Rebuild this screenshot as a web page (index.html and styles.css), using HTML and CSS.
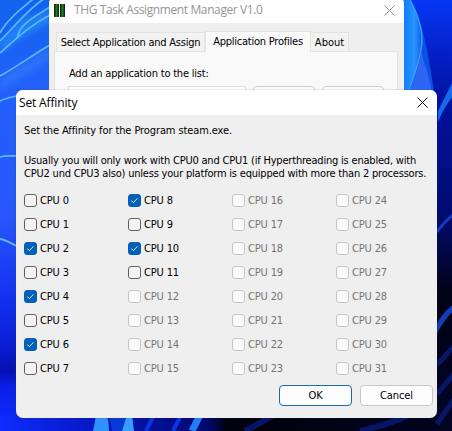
FILE: index.html
```html
<!DOCTYPE html>
<html lang="en">
<head>
<meta charset="utf-8">
<title>Set Affinity</title>
<link rel="stylesheet" href="styles.css">
</head>
<body>
<main class="desktop">
  <svg class="wallpaper" viewBox="0 0 452 431" preserveAspectRatio="none" aria-hidden="true">
    <defs>
      <linearGradient id="base" x1="0" y1="0" x2="0" y2="1">
        <stop offset="0" stop-color="#1263ee"/><stop offset=".2" stop-color="#2260fa"/>
        <stop offset=".5" stop-color="#2857fb"/><stop offset=".7" stop-color="#1030ee"/>
        <stop offset=".8" stop-color="#0a1fd4"/><stop offset=".86" stop-color="#0510b0"/>
        <stop offset=".9" stop-color="#0a20e8"/><stop offset="1" stop-color="#0c2dff"/>
      </linearGradient>
      <linearGradient id="right" x1="0" y1="0" x2="0" y2="1">
        <stop offset="0" stop-color="#0638f4"/><stop offset=".12" stop-color="#0420c8"/>
        <stop offset=".25" stop-color="#02119b"/><stop offset=".5" stop-color="#020b70"/>
        <stop offset=".68" stop-color="#010216"/><stop offset="1" stop-color="#010426"/>
      </linearGradient>
      <linearGradient id="petal" x1="0" y1="0" x2="1" y2="0">
        <stop offset="0" stop-color="#0876f7"/><stop offset=".7" stop-color="#2895ff"/><stop offset="1" stop-color="#1264ee"/>
      </linearGradient>
      <linearGradient id="bottom" x1="0" y1="0" x2="1" y2="0">
        <stop offset="0" stop-color="#0c2dff"/><stop offset=".2" stop-color="#0719c4"/>
        <stop offset=".46" stop-color="#020870"/><stop offset=".5" stop-color="#01020b"/><stop offset="1" stop-color="#010320"/>
      </linearGradient>
      <filter id="soft" filterUnits="userSpaceOnUse" x="-10" y="-10" width="472" height="451" color-interpolation-filters="sRGB"><feGaussianBlur stdDeviation=".6"/></filter>
      <filter id="wide" filterUnits="userSpaceOnUse" x="-10" y="-10" width="472" height="451" color-interpolation-filters="sRGB"><feGaussianBlur stdDeviation="3"/></filter>
    </defs>
    <rect width="452" height="431" fill="url(#base)"/>
    <path d="M400 0H452V431H400Z" fill="url(#right)"/>
    <path d="M0 416H452V431H0Z" fill="url(#bottom)"/>
    <path d="M17 40C20 25 35 17 50 9V23C31 31 15 41 0 53V42C10 31 18 22 27 14L33 16C24 24 18 31 17 40Z" fill="#2a96fa" opacity=".65" filter="url(#wide)"/>
    <path d="M0 78C18 68 34 56 50 47V60C31 72 17 81 0 90Z" fill="#3a83ff" opacity=".5" filter="url(#wide)"/>
    <g fill="none" stroke="#5cb8fb" stroke-width="1.7" filter="url(#soft)">
      <path d="M0 33C6 21 20 9 36-3"/>
      <path d="M0 41C16 25 29 8 48-4"/>
      <path d="M17 39C19 24 33 18 50 7"/>
      <path d="M0 53C17 38 29 26 50 15"/>
      <path d="M0 76C18 66 34 54 50 45"/>
      <path d="M0 101C6 98 12 97 17 96"/>
      <path d="M0 157C6 155 12 156 17 156"/>
      <path d="M0 239C7 240 12 244 17 246" stroke-width="2"/>
    </g>
    <g filter="url(#soft)">
      <path d="M412 0C423 22 429 59 434 91H404V0Z" fill="#0a50e6"/>
      <path d="M400 0H409C418 15 423 32 420 49C419 65 412 79 408 92H400Z" fill="url(#petal)"/>
      <path d="M410 0C419 17 424 35 421 49C419 66 412 79 409 91" fill="none" stroke="#3ba0fa" stroke-width="1.5"/>
      <path d="M421 50C423 62 430 75 432 94H408C413 80 420 67 421 50Z" fill="#2e65f3"/>
      <path d="M454 79L438 111V122C443 110 448 102 454 95Z" fill="#1469ee"/>
      <path d="M437 232C443 223 449 218 455 213" fill="none" stroke="#153bc0" stroke-width="3"/>
      <path d="M437 324C442 314 448 308 455 303V310C449 315 443 322 437 334Z" fill="#123eba"/>
      <path d="M437 365L455 345M437 394L455 373M437 424L455 398" stroke="#071768" stroke-width="5"/>
      <path d="M96 415H107Q109 424 109 431H93Q95 422 96 415Z" fill="#2f91fa"/>
      <path d="M109 415L112 431H122L130 415Z" fill="#0838d6"/>
      <path d="M127 415H132L134 431H122Z" fill="#379dff"/>
      <path d="M154 415L146 431M181 415L173 431" stroke="#0b35e0" stroke-width="4"/>
      <path d="M200 415L192 431" stroke="#207df7" stroke-width="7"/>
      <path d="M245 431Q259 424 272 416M360 431Q387 425 407 416" fill="none" stroke="#071566" stroke-width="6"/>
    </g>
  </svg>

  <section class="manager">
    <header class="titlebar">
      <svg class="app-icon" viewBox="0 0 12 13" aria-hidden="true">
        <path d="M0 0h5v13H0zM6 0h5v13H6z" fill="#123a13"/>
        <path d="M1.5 0h2v13h-2zM7.5 0h2v13h-2z" fill="#167c20"/>
        <path d="M.5 1v12M4.5 1v12M6.5 1v12M10.5 1v12" stroke="#071307" stroke-dasharray="1 1"/>
      </svg>
      <h1 class="manager-title">THG Task Assignment Manager V1.0</h1>
      <svg class="close" viewBox="0 0 11 11" aria-hidden="true"><path d="M.5.5l10 10M10.5.5l-10 10"/></svg>
    </header>
    <nav class="tabs">
      <span class="tab tab-select">Select Application and Assign</span>
      <span class="tab tab-active">Application Profiles</span>
      <span class="tab tab-about">About</span>
    </nav>
    <div class="panel">
      <p class="list-label">Add an application to the list:</p>
      <div class="controls"><span class="field"></span><span class="stub"></span><span class="stub"></span></div>
    </div>
  </section>

  <section class="dialog">
    <header class="dialog-bar">
      <h2 class="dialog-title">Set Affinity</h2>
      <svg class="close close-dark" viewBox="0 0 11 11" aria-hidden="true"><path d="M.5.5l10 10M10.5.5l-10 10"/></svg>
    </header>
    <div class="dialog-body">
      <p class="intro">Set the Affinity for the Program steam.exe.</p>
      <p class="hint">Usually you will only work with CPU0 and CPU1 (if Hyperthreading is enabled, with<br>CPU2 und CPU3 also) unless your platform is equipped with more than 2 processors.</p>
      <div class="cpus" id="cpus"></div>
      <footer class="actions"><button class="button primary">OK</button><button class="button">Cancel</button></footer>
    </div>
  </section>
</main>
<script src="script.js"></script>
</body>
</html>
```
FILE: styles.css
```css
* { box-sizing: border-box; }
body { margin: 0; overflow: hidden; font: 11px/13px "DejaVu Sans Condensed", "DejaVu Sans", sans-serif; font-stretch: condensed; color: #000; }
h1, h2, p { margin: 0; font-weight: 400; white-space: nowrap; }
.desktop { position: relative; width: 452px; height: 431px; overflow: hidden; }
.wallpaper { display: block; width: 452px; height: 431px; }

.manager { position: absolute; left: 49px; top: -8px; width: 355px; height: 120px; border-radius: 13px; overflow: hidden; background: #efefef; }
.titlebar { display: flex; align-items: center; height: 31px; padding: 5px 9px 0 5px; background: #fff; }
.app-icon { width: 12px; height: 13px; }
.manager-title { margin-left: 8px; font: 12px/18px "Open Sans", sans-serif; letter-spacing: -.39px; color: #949494; }
.close { width: 11px; height: 11px; margin-left: auto; fill: none; stroke: #929292; }
.close-dark { stroke: #111; }
.tabs { display: flex; align-items: flex-end; height: 28px; padding-left: 7px; letter-spacing: -.23px; }
.tab { height: 19px; padding-top: 3px; border: 1px solid #e2e2e2; border-bottom: 0; background: #f3f3f3; text-align: center; white-space: nowrap; }
.tab-select { width: 149px; }
.tab-active { width: 106px; height: 21px; margin-bottom: -1px; background: #f9f9f9; z-index: 1; position: relative; }
.tab-about { width: 38px; border-left: 0; letter-spacing: 0; }
.panel { width: 344px; height: 70px; margin-left: 5px; padding: 15px 13px; border: 1px solid #e2e2e2; background: #f9f9f9; }
.list-label { padding-left: 1px; letter-spacing: -.2px; }
.controls { display: flex; gap: 7px; margin-top: 6px; }
.field { width: 179px; height: 23px; border: 1px solid #ddd; background: #fff; }
.stub { width: 62px; height: 23px; border: 1px solid #ccc; border-radius: 4px; background: #fdfdfd; }

.dialog { position: absolute; left: 16px; top: 90px; width: 421px; height: 328px; border-radius: 7px; overflow: hidden; background: #efefef; box-shadow: 0 0 1px #444; }
.dialog-bar { display: flex; align-items: center; height: 25px; padding: 0 9.5px 0 3px; background: #fff; }
.dialog-title { font: 12px/18px "Open Sans", sans-serif; letter-spacing: -.15px; color: #000; }
.dialog-body { padding: 9px 4px 0 8px; }
.intro { letter-spacing: -.1px; }
.hint { margin-top: 17px; letter-spacing: -.2px; }
.cpus { display: grid; grid-template-columns: repeat(4, 104px); grid-template-rows: repeat(8, 24px); grid-auto-flow: column; margin-top: 8px; }
.cpu { display: flex; align-items: center; gap: 3px; white-space: nowrap; letter-spacing: -.15px; }
.name { padding-top: 1px; }
.box { width: 13px; height: 13px; border: 1px solid #5f5f5f; border-radius: 3px; background: #f4f4f4; }
.checked .box { border-color: #0360b8; background: #0360b8; }
.tick { display: block; width: 11px; height: 11px; fill: none; stroke: #d5e7f7; stroke-width: 1; }
.disabled { color: #747474; }
.disabled .box { border-color: #c5c5c5; background: #fafafa; }
.actions { display: flex; justify-content: flex-end; gap: 8px; margin-top: 5px; }
.button { width: 73px; height: 21px; padding: 0; border: 1px solid #c7c7c7; border-radius: 4px; background: #fdfdfd; font: inherit; letter-spacing: -.1px; color: #000; }
.primary { border-color: #176aaf; }
```
FILE: script.js
```js
const checked = new Set([2, 4, 6, 8, 10]);
const list = document.getElementById("cpus");
for (let i = 0; i < 32; i++) {
  const item = document.createElement("div");
  item.className = "cpu" + (checked.has(i) ? " checked" : i > 11 ? " disabled" : "");
  const tick = checked.has(i) ? '<svg class="tick" viewBox="0 0 11 11"><path d="M2.3 5.6l2 2 4.2-4.3"/></svg>' : "";
  item.innerHTML = `<span class="box">${tick}</span><span class="name">CPU ${i}</span>`;
  list.append(item);
}
```
